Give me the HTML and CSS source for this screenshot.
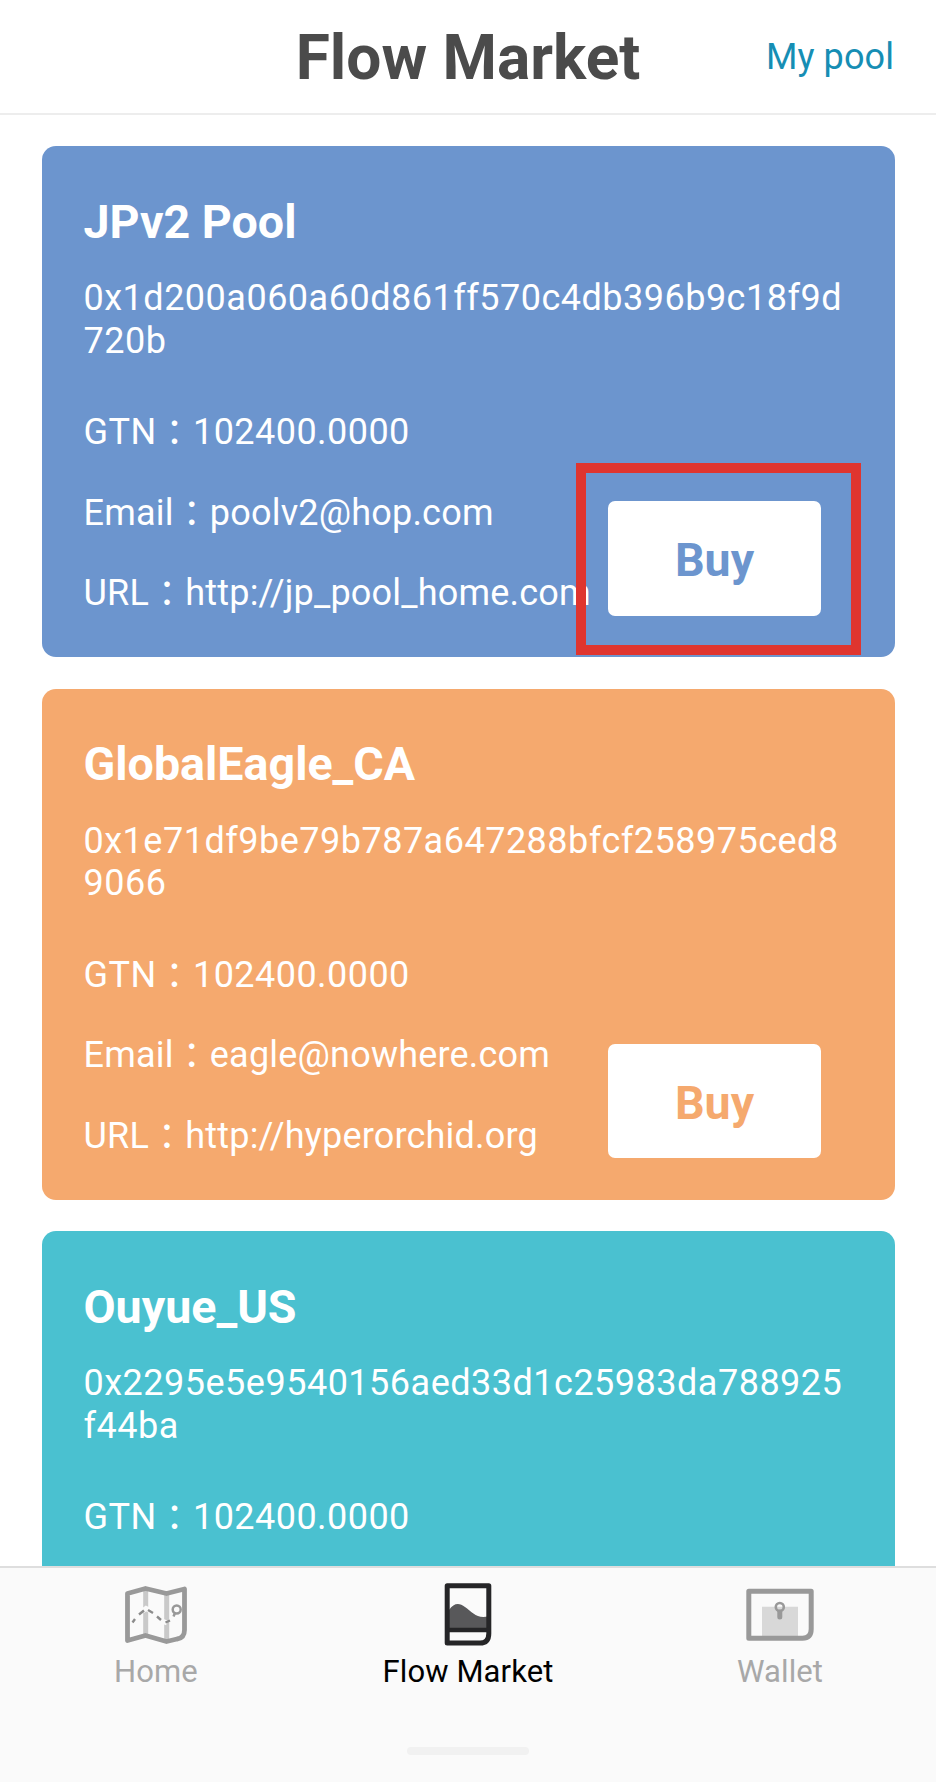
FILE: index.html
```html
<!DOCTYPE html>
<html lang="en">
<head>
<meta charset="utf-8">
<title>Flow Market</title>
<link rel="stylesheet" href="styles.css">
</head>
<body>
<div class="app">
  <header class="header">
    <h1 class="title">Flow Market</h1>
    <a class="my-pool">My pool</a>
  </header>
  <main class="pools">
    <section class="card blue">
      <h2 class="name">JPv2 Pool</h2>
      <p class="address">0x1d200a060a60d861ff570c4db396b9c18f9d720b</p>
      <div class="info">
        <div class="details">
          <p class="amount">GTN<span class="colon">：</span>102400.0000</p>
          <p>Email<span class="colon">：</span>poolv2@hop.com</p>
          <p>URL<span class="colon">：</span>http://jp_pool_home.com</p>
        </div>
        <button class="buy">Buy<span class="highlight"></span></button>
      </div>
    </section>
    <section class="card orange">
      <h2 class="name">GlobalEagle_CA</h2>
      <p class="address">0x1e71df9be79b787a647288bfcf258975ced89066</p>
      <div class="info">
        <div class="details">
          <p class="amount">GTN<span class="colon">：</span>102400.0000</p>
          <p>Email<span class="colon">：</span>eagle@nowhere.com</p>
          <p>URL<span class="colon">：</span>http://hyperorchid.org</p>
        </div>
        <button class="buy">Buy</button>
      </div>
    </section>
    <section class="card teal">
      <h2 class="name">Ouyue_US</h2>
      <p class="address">0x2295e5e9540156aed33d1c25983da788925f44ba</p>
      <div class="info">
        <div class="details">
          <p class="amount">GTN<span class="colon">：</span>102400.0000</p>
        </div>
      </div>
    </section>
  </main>
  <footer class="footer">
    <nav class="tabs">
      <a class="tab">
        <svg class="icon" viewBox="0 0 72 72" fill="none">
          <path d="M25.7 11V57M46.7 15V62" stroke="#c9c9c9" stroke-width="5"/>
          <path d="M7.5 14.5L25.5 9.5L46.5 14.5L64.5 10V51Q64.5 59 57 60L46.5 62.500L25.500 56.500L7.500 61.500Z" stroke="#999" stroke-width="4.8" stroke-linejoin="round"/>
          <path d="M22.500 32L26 29.500L30 31.500M42 42L47 44" stroke="#fafafa" stroke-width="5"/>
          <path d="M12.500 43.500L15 40M19 35.500L24 31.500M28 31L33 34M37 37.500L41 41M45.500 43.500L50 41.500" stroke="#8c8c8c" stroke-width="2.400"/>
          <circle cx="56.700" cy="30.500" r="4" stroke="#999" stroke-width="2.500"/>
          <path d="M55 34L53.500 37.500" stroke="#999" stroke-width="2.500"/>
        </svg>
        <span>Home</span>
      </a>
      <a class="tab active">
        <svg class="icon" viewBox="0 0 72 72" fill="none">
          <path d="M17 31C22 24 27 23.500 33 28C40 33 46 41 57 37V51H17Z" fill="#58585a"/>
          <path d="M15.200 6.800H56.800V54.500Q56.800 64.100 48 64.100H15.200Z" stroke="#252527" stroke-width="5" stroke-linejoin="round"/>
          <path d="M16 51H56" stroke="#252527" stroke-width="4.500"/>
          <path d="M56 55L55 58Q53 62 49 62L46 64H52L57 60Z" fill="#252527"/>
        </svg>
        <span>Flow Market</span>
      </a>
      <a class="tab">
        <svg class="icon" viewBox="0 0 72 72" fill="none">
          <path d="M18 27.700H54V58H18Z" fill="#d8d8d8"/>
          <path d="M4.800 12.200H67.200V50Q67.200 59.200 58.500 59.200H4.800Z" stroke="#999" stroke-width="5" stroke-linejoin="round"/>
          <circle cx="35.800" cy="28" r="4" stroke="#999" stroke-width="2.600"/>
          <path d="M35.800 33V38" stroke="#999" stroke-width="5" stroke-linecap="round"/>
        </svg>
        <span>Wallet</span>
      </a>
    </nav>
    <div class="home-bar"></div>
  </footer>
</div>
</body>
</html>
```
FILE: styles.css
```css
* { box-sizing: border-box; margin: 0; padding: 0; }
body { background: #fff; font-family: Roboto, "Noto Sans CJK JP", sans-serif; }
.app { display: flex; flex-direction: column; width: 936px; height: 1782px; overflow: hidden; }
.header {
  display: grid; grid-template-columns: 1fr auto 1fr; align-items: center;
  height: 115px; padding: 2px 42px 0; flex: none; border-bottom: 2px solid #ededed;
}
.title { grid-column: 2; font-size: 62.2px; line-height: 74px; font-weight: 700; color: #4b4b4b; }
.my-pool { justify-self: end; margin-bottom: 2px; font-size: 36px; line-height: 42px; color: #168eb4; letter-spacing: .1px; }
.pools { flex: 1; min-height: 0; overflow: hidden; padding: 31px 41.5px 0; }
.card { height: 511px; margin-bottom: 31.5px; padding: 47.5px 42px 0; border-radius: 14px; color: #fff; }
.blue { background: #6c95ce; --tone: #6c95ce; }
.orange { background: #f5a96e; --tone: #f5a96e; }
.teal { background: #4ac1d0; --tone: #4ac1d0; }
.name { font-size: 46.6px; line-height: 56px; font-weight: 700; }
.address { margin: 27.5px 0 30px; font-size: 36px; line-height: 42.5px; letter-spacing: .5px; word-break: break-all; }
.info { display: flex; align-items: flex-start; justify-content: space-between; }
.details { font-size: 36px; line-height: 80.5px; letter-spacing: .2px; white-space: nowrap; }
.details p { height: 80.5px; }
.details .amount { letter-spacing: .45px; }
.colon { position: relative; top: 2px; }
.buy {
  position: relative; flex: none; width: 213px; height: 114.5px; margin: 109px 31.5px 0 0;
  border: 0; border-radius: 7px; background: #fff; color: var(--tone);
  font: 700 46.5px Roboto, sans-serif; padding-top: 4px;
}
.highlight { position: absolute; inset: -38px -39.5px -39.5px -32.5px; border: 10px solid #df352f; }
.footer { flex: none; height: 216px; background: #fafafa; border-top: 2px solid #dedede; }
.tabs { display: grid; grid-template-columns: repeat(3, 1fr); padding-top: 11px; }
.tab { display: flex; flex-direction: column; align-items: center; font-size: 31px; line-height: 36px; color: #a8a8a8; letter-spacing: .1px; }
.tab.active { color: #000; }
.icon { width: 72px; height: 72px; margin-bottom: 3px; }
.home-bar { width: 122px; height: 8px; margin: 57px auto 0; border-radius: 4px; background: #f1f1f1; }
```
